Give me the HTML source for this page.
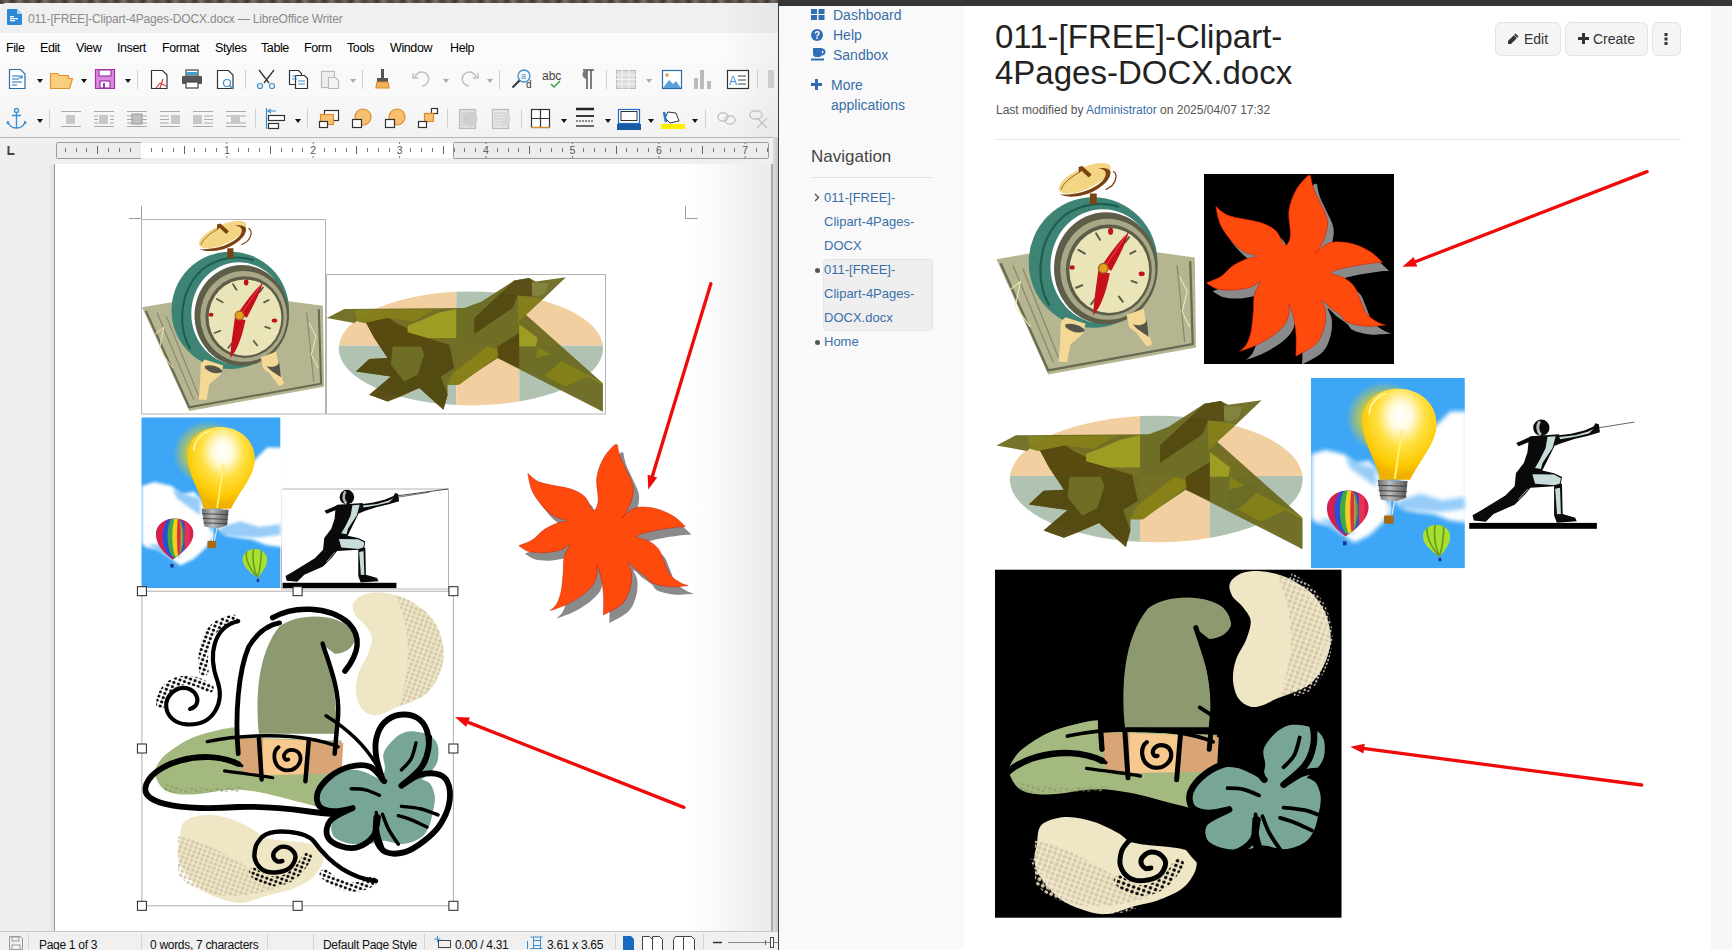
<!DOCTYPE html>
<html><head><meta charset="utf-8">
<style>
*{margin:0;padding:0;box-sizing:border-box}
html,body{width:1732px;height:950px;overflow:hidden;background:#fff;font-family:"Liberation Sans",sans-serif;position:relative}
.a{position:absolute}
.t{position:absolute;white-space:nowrap;line-height:1}
/* left window */
#desk{left:0;top:0;width:779px;height:4px;background:repeating-linear-gradient(90deg,#4a403a 0px,#6a625c 7px,#3e3630 13px,#7a726a 19px,#4a403a 26px)}
#titlebar{left:0;top:3px;width:778px;height:30px;background:#f0f0f0;border-top-left-radius:6px}
#menubar{left:0;top:33px;width:778px;height:29px;background:#fbfbfb}
#tb1{left:0;top:62px;width:778px;height:36px;background:#f9f9f9}
#tb2{left:0;top:98px;width:778px;height:39px;background:linear-gradient(#f8f8f8,#f2f2f2)}
#rulerbar{left:0;top:137px;width:778px;height:27px;background:#efefef;border-top:1px solid #b9b9b9}
#docarea{left:0;top:164px;width:778px;height:767px;background:#efefef}
#page{left:54px;top:164px;width:718px;height:767px;background:#fff;border-left:1px solid #9a9a9a}
#status{left:0;top:931px;width:778px;height:19px;background:#f0f0f0;border-top:1px solid #c8c8c8}
.menu{top:42px;font-size:12.5px;letter-spacing:-0.4px;color:#000}
.sep{position:absolute;width:1px;background:#cfcfcf}
.dd{position:absolute;width:0;height:0;border-left:3.5px solid transparent;border-right:3.5px solid transparent;border-top:4px solid #111}
.ddg{border-top-color:#aaa}
/* right window */
#rwin{left:778px;top:0;width:954px;height:950px;background:#fff;border-left:1px solid #3c3c3c}
#rtop{left:778px;top:0;width:954px;height:6px;background:#363636}
#sidebar{left:779px;top:6px;width:185px;height:944px;background:#f9f9f9}
#rpanel{left:1711px;top:6px;width:21px;height:944px;background:#f7f7f7}
.side{font-size:14px;color:#3a6fa8}
.nav{font-size:13px;color:#3a6fa8;line-height:24px}
.btn{position:absolute;top:22px;height:34px;background:#f5f5f5;border:1px solid #e3e3e3;border-radius:6px}
</style></head><body>
<!-- LEFT WINDOW -->
<div id="desk" class="a"></div>
<div id="titlebar" class="a"></div>
<div id="menubar" class="a"></div>
<div id="tb1" class="a"></div>
<div id="tb2" class="a"></div>
<div id="rulerbar" class="a"></div>
<div id="docarea" class="a"></div>
<div class="a" style="left:48px;top:165px;width:6px;height:766px;background:linear-gradient(90deg,rgba(0,0,0,0),rgba(0,0,0,0.07))"></div>
<div id="page" class="a"></div>
<div id="status" class="a"></div>
<div class="a" style="left:720px;top:3px;width:58px;height:134px;background:linear-gradient(90deg,rgba(0,0,0,0),rgba(0,0,0,0.045))"></div>

<!-- title -->
<svg class="a" style="left:7px;top:9px" width="15" height="16" viewBox="0 0 15 16"><path d="M1 0h9l5 5v10a1 1 0 0 1-1 1H1a1 1 0 0 1-1-1V1a1 1 0 0 1 1-1z" fill="#2b8ad8"/><path d="M10 0l5 5h-5z" fill="#a9d4f5"/><rect x="3" y="7" width="4" height="1.3" fill="#fff"/><rect x="3" y="9" width="8" height="1.3" fill="#fff"/><rect x="3" y="11" width="5" height="1.3" fill="#fff"/></svg>
<div class="t" style="left:28px;top:13px;font-size:12px;letter-spacing:-0.17px;color:#8a8a8a">011-[FREE]-Clipart-4Pages-DOCX.docx — LibreOffice Writer</div>

<!-- menu -->
<div class="t menu" style="left:6px">File</div>
<div class="t menu" style="left:40px">Edit</div>
<div class="t menu" style="left:76px">View</div>
<div class="t menu" style="left:117px">Insert</div>
<div class="t menu" style="left:162px">Format</div>
<div class="t menu" style="left:215px">Styles</div>
<div class="t menu" style="left:261px">Table</div>
<div class="t menu" style="left:304px">Form</div>
<div class="t menu" style="left:347px">Tools</div>
<div class="t menu" style="left:390px">Window</div>
<div class="t menu" style="left:450px">Help</div>


<!-- toolbar 1 -->
<svg class="a" style="left:0;top:62px" width="778" height="36" viewBox="0 62 778 36">
<g fill="none" stroke-width="1.2">
 <!-- new doc -->
 <path d="M9.5 69.5h11l4.5 4.5v14.5h-15.5z" stroke="#2a6bb0" fill="#fff"/>
 <path d="M12 76h7M12 79h7M12 82h10M12 85h5" stroke="#2a6bb0"/>
 <rect x="19" y="75.5" width="4" height="3" fill="#5aa0d8" stroke="none"/>
 <!-- open -->
 <path d="M50.5 73.5h7l2 2h9v3h4l-3 10h-19z" stroke="#e8902a" fill="#f9cf7d"/>
 <!-- save -->
 <path d="M95.5 69.5h19v19h-19z" stroke="#a035a8" fill="#d98ae0"/>
 <rect x="99" y="70" width="12" height="6" fill="#fff" stroke="#a035a8"/>
 <rect x="100" y="81" width="10" height="7" fill="#fff" stroke="#a035a8"/>
 <rect x="103" y="83" width="2" height="5" fill="#a035a8" stroke="none"/>
 <!-- pdf -->
 <path d="M151.5 70.5h11l4.5 4.5v13.5h-15.5z" stroke="#333" fill="#fff"/>
 <path d="M163 79l-3 9M160 83l-4 5M160 83l6 3" stroke="#e03a3a"/>
 <!-- print -->
 <rect x="186" y="70" width="12" height="6" fill="#fff" stroke="#444"/>
 <rect x="187" y="72" width="10" height="3" fill="#3aa0d8" stroke="none"/>
 <rect x="182" y="76" width="20" height="8" fill="#555" stroke="none" rx="1"/>
 <rect x="186" y="82" width="12" height="6" fill="#fff" stroke="#444"/>
 <!-- preview -->
 <path d="M217.5 70.5h11l4.5 4.5v13.5h-15.5z" stroke="#333" fill="#fff"/>
 <circle cx="227" cy="83" r="3.5" stroke="#3a8fd0" fill="#fff"/>
 <path d="M229.5 85.5l3.5 3.5" stroke="#3a8fd0" stroke-width="1.6"/>
 <!-- cut -->
 <path d="M259 70l10 13M274 70l-10 13" stroke="#333" stroke-width="1.3"/>
 <circle cx="260" cy="86" r="2.5" stroke="#3a8fd0"/><circle cx="272" cy="86" r="2.5" stroke="#3a8fd0"/>
 <!-- copy -->
 <path d="M289.5 70.5h9l3 3v11h-12z" stroke="#333" fill="#fff"/>
 <path d="M295.5 75.5h9l3 3v10h-12z" stroke="#333" fill="#fff"/>
 <path d="M292 76h5M292 79h5M298 81h7M298 84h7" stroke="#3a8fd0"/>
 <!-- paste gray -->
 <rect x="321.5" y="71.5" width="13" height="16" stroke="#bbb" fill="#eee"/>
 <path d="M328.5 77.5h7l3 3v8h-10z" stroke="#bbb" fill="#f4f4f4"/>
 <!-- brush -->
 <rect x="381" y="69" width="3" height="9" fill="#555" stroke="none"/>
 <path d="M377 78h11v4h-11z" fill="#555" stroke="none"/>
 <path d="M377 82h11l1 6h-13z" fill="#f2b25a" stroke="#e08a2a"/>
 <!-- undo/redo gray -->
 <path d="M415 77a7 7 0 1 1 7 9" stroke="#bbb" stroke-width="1.4"/><path d="M413 73v5h5" stroke="#bbb" stroke-width="1.4"/>
 <path d="M476 77a7 7 0 1 0 -7 9" stroke="#bbb" stroke-width="1.4"/><path d="M478 73v5h-5" stroke="#bbb" stroke-width="1.4"/>
 <!-- find replace -->
 <circle cx="524" cy="76" r="6" stroke="#3a8fd0" stroke-width="1.3"/>
 <path d="M519.5 80.5l-7 7" stroke="#333" stroke-width="2"/>
</g>
<text x="521" y="79" font-size="9" fill="#3a8fd0" font-family="Liberation Sans">a</text>
<text x="526" y="88" font-size="10" fill="#333" font-family="Liberation Sans">d</text>
<text x="542" y="80" font-size="12" fill="#444" font-family="Liberation Sans">abc</text>
<path d="M551 84l3 3 6-6" stroke="#3aa040" stroke-width="1.5" fill="none"/>
<path d="M583 70h11M587 70v19M591 70v19" stroke="#555" stroke-width="1.5" fill="none"/>
<path d="M587 70a4.5 4.5 0 0 0 0 9z" fill="#777"/>
<!-- table gray -->
<g fill="none" stroke="#bbb" stroke-width="1"><rect x="616.5" y="70.5" width="19" height="18" fill="#ddd"/><path d="M616 75h20M616 79.5h20M616 84h20M622 70v19M629 70v19" stroke="#f4f4f4"/></g>
<!-- image -->
<rect x="662.5" y="70.5" width="19" height="18" fill="#fff" stroke="#2a6bb0" stroke-width="1.2"/>
<circle cx="667" cy="75" r="1.8" fill="#f0a040"/>
<path d="M663 88l6-8 4 4 3-3 5 7z" fill="#5aa0d8"/>
<!-- chart gray -->
<rect x="694" y="78" width="4" height="11" fill="#bbb"/><rect x="700" y="70" width="4" height="19" fill="#bbb"/><rect x="707" y="81" width="4" height="8" fill="#bbb"/>
<!-- textbox -->
<rect x="727.5" y="70.5" width="21" height="18" fill="#fff" stroke="#333" stroke-width="1.2"/>
<text x="729" y="85" font-size="12" fill="#3a8fd0" font-family="Liberation Sans">A</text>
<path d="M738 76h8M738 80h8M738 84h8" stroke="#444" stroke-width="1"/>
<rect x="768" y="70" width="6" height="18" fill="#ccc"/>
</svg>
<div class="dd" style="left:37px;top:79px"></div>
<div class="dd" style="left:81px;top:79px"></div>
<div class="dd" style="left:125px;top:79px"></div>
<div class="dd ddg" style="left:350px;top:79px"></div>
<div class="dd ddg" style="left:443px;top:79px"></div>
<div class="dd ddg" style="left:487px;top:79px"></div>
<div class="dd ddg" style="left:646px;top:79px"></div>
<div class="sep" style="left:137px;top:70px;height:19px"></div>
<div class="sep" style="left:245px;top:70px;height:19px"></div>
<div class="sep" style="left:362px;top:70px;height:19px"></div>
<div class="sep" style="left:499px;top:70px;height:19px"></div>
<div class="sep" style="left:606px;top:70px;height:19px"></div>
<div class="sep" style="left:757px;top:70px;height:19px"></div>

<!-- toolbar 2 -->
<svg class="a" style="left:0;top:98px" width="778" height="39" viewBox="0 98 778 39">
<g fill="none" stroke-width="1.3">
 <circle cx="16.5" cy="110.5" r="2" stroke="#3a8fd0"/>
 <path d="M16.5 112.5v15M12 115.5h9M8 121a8.5 7 0 0 0 17 0" stroke="#3a8fd0"/>
 <path d="M8 121l-1 3M25 121l1 3" stroke="#3a8fd0"/>
</g>
<g id="wrap" stroke="#aaa" stroke-width="1" fill="none">
 <path d="M61 111.5h20M61 126.5h20"/>
 <rect x="66" y="115" width="9" height="9" fill="#c8c8c8" stroke="none"/>
 <path d="M94 111.5h20M94 126.5h20M94 116h4M94 119.5h4M94 123h4M110 116h4M110 119.5h4M110 123h4"/>
 <rect x="99" y="115" width="9" height="9" fill="#c8c8c8" stroke="none"/>
 <path d="M127 111.5h20M127 126.5h20M127 116h20M127 119.5h20M127 123h20"/>
 <rect x="132" y="114" width="10" height="10" fill="#c0c0c0" stroke="#999"/>
 <path d="M160 111.5h20M160 126.5h20M160 116h9M160 119.5h9M160 123h9"/>
 <rect x="171" y="115" width="9" height="9" fill="#c8c8c8" stroke="none"/>
 <path d="M193 111.5h20M193 126.5h20M204 116h9M204 119.5h9M204 123h9"/>
 <rect x="193" y="115" width="9" height="9" fill="#c8c8c8" stroke="none"/>
 <path d="M226 111.5h20M226 126.5h20M226 116h20M226 123h20"/>
 <rect x="231" y="115" width="9" height="9" fill="#c8c8c8" stroke="none"/>
</g>
<g fill="none" stroke-width="1.2">
 <path d="M266.5 108v21" stroke="#3a8fd0"/>
 <path d="M268 111h8M271 109l-3 2 3 2" stroke="#3a8fd0"/>
 <rect x="268.5" y="115.5" width="16" height="5" stroke="#333" fill="#fff"/>
 <rect x="268.5" y="123.5" width="10" height="5" stroke="#333" fill="#fff"/>
 <!-- bring front -->
 <rect x="324.5" y="110.5" width="14" height="10" stroke="#333" fill="#fff"/>
 <rect x="320.5" y="114.5" width="13" height="10" stroke="#e08a2a" fill="#f6c070"/>
 <rect x="319.5" y="121.5" width="8" height="6" stroke="#333" fill="#fff"/>
 <circle cx="363" cy="117" r="8" stroke="#e08a2a" fill="#f6c070"/>
 <rect x="352.5" y="119.5" width="9" height="8" stroke="#333" fill="#fff"/>
 <circle cx="397" cy="117" r="8" stroke="#e08a2a" fill="#f6c070"/>
 <rect x="385.5" y="119.5" width="9" height="8" stroke="#333" fill="#fff"/>
 <rect x="431.5" y="108.5" width="6" height="5" stroke="#333" fill="#fff"/>
 <rect x="424.5" y="113.5" width="9" height="8" stroke="#e08a2a" fill="#f6c070"/>
 <rect x="418.5" y="121.5" width="8" height="6" stroke="#333" fill="#fff"/>
 <!-- gray -->
 <rect x="459.5" y="109.5" width="16" height="19" stroke="#bbb" fill="#e2e2e2"/>
 <path d="M461 113h4M461 116h4M461 119h4M461 122h4M461 125h4" stroke="#c4c4c4"/>
 <circle cx="470" cy="119" r="7.5" fill="#cfcfcf" stroke="none"/>
 <rect x="492.5" y="109.5" width="16" height="19" stroke="#bbb" fill="#e8e8e8"/>
 <path d="M494 113h12M494 116h12M494 119h12M494 122h12M494 125h12" stroke="#c8c8c8"/>
 <path d="M503 111.5a7.5 7.5 0 0 1 0 15" fill="#d8d8d8" stroke="none"/>
 <!-- borders -->
 <rect x="531.5" y="109.5" width="18" height="18" stroke="#333" fill="#fff"/>
 <path d="M540.5 109v19M531 118.5h19" stroke="#333"/>
 <path d="M531 127.5h19" stroke="#e08a2a"/>
</g>
<path d="M576 109h18" stroke="#222" stroke-width="2.5"/>
<path d="M576 116h18" stroke="#222" stroke-width="1.8"/>
<path d="M576 121h18" stroke="#222" stroke-width="1" stroke-dasharray="2 1"/>
<path d="M576 126h18" stroke="#222" stroke-width="1.3"/>
<rect x="618.5" y="109.5" width="21" height="14" fill="#fff" stroke="#1e6cc0" stroke-width="1.2"/>
<rect x="621" y="111.5" width="16" height="9" fill="none" stroke="#333" stroke-width="1"/>
<rect x="617" y="124" width="24" height="6" fill="#1a5aa8"/>
<path d="M665 118l3-6 8 1 3 8-9 2z" fill="#fff" stroke="#333" stroke-width="1"/>
<path d="M664 112l2 10" stroke="#2a7ad0" stroke-width="2.5"/>
<rect x="661" y="124" width="24" height="5" fill="#ffee00"/>
<g fill="none" stroke="#c4c4c4" stroke-width="1.5">
 <rect x="718" y="113" width="10" height="8" rx="4"/><rect x="725" y="116" width="10" height="8" rx="4"/>
 <rect x="750" y="111" width="12" height="8" rx="4"/><path d="M757 118l10 10M767 118l-10 10"/>
</g>
</svg>
<div class="dd" style="left:37px;top:119px"></div>
<div class="dd" style="left:295px;top:119px"></div>
<div class="dd" style="left:561px;top:119px"></div>
<div class="dd" style="left:605px;top:119px"></div>
<div class="dd" style="left:648px;top:119px"></div>
<div class="dd" style="left:692px;top:119px"></div>
<div class="sep" style="left:49px;top:109px;height:19px"></div>
<div class="sep" style="left:255px;top:109px;height:19px"></div>
<div class="sep" style="left:307px;top:109px;height:19px"></div>
<div class="sep" style="left:447px;top:109px;height:19px"></div>
<div class="sep" style="left:521px;top:109px;height:19px"></div>
<div class="sep" style="left:705px;top:109px;height:19px"></div>


<!-- ruler -->
<svg class="a" style="left:0;top:137px" width="778" height="27" viewBox="0 137 778 27">
<path d="M8.5 146v8h6" stroke="#444" stroke-width="2" fill="none"/>
<rect x="56.5" y="142.5" width="85" height="16" fill="#ececec" stroke="#9a9a9a" stroke-width="1" rx="1"/>
<rect x="141" y="143" width="312" height="15" fill="#fff"/>
<rect x="453.5" y="142.5" width="315" height="16" fill="#ececec" stroke="#9a9a9a" stroke-width="1" rx="1"/>
<path d="M65.5 148v4" stroke="#777" stroke-width="1"/>
<path d="M76.5 148v4" stroke="#777" stroke-width="1"/>
<path d="M86.5 148v4" stroke="#777" stroke-width="1"/>
<path d="M97.5 146v8" stroke="#666" stroke-width="1"/>
<path d="M108.5 148v4" stroke="#777" stroke-width="1"/>
<path d="M119.5 148v4" stroke="#777" stroke-width="1"/>
<path d="M130.5 148v4" stroke="#777" stroke-width="1"/>
<path d="M151.5 148v4" stroke="#777" stroke-width="1"/>
<path d="M162.5 148v4" stroke="#777" stroke-width="1"/>
<path d="M173.5 148v4" stroke="#777" stroke-width="1"/>
<path d="M184.5 146v8" stroke="#666" stroke-width="1"/>
<path d="M194.5 148v4" stroke="#777" stroke-width="1"/>
<path d="M205.5 148v4" stroke="#777" stroke-width="1"/>
<path d="M216.5 148v4" stroke="#777" stroke-width="1"/>
<text x="226.8" y="154" font-size="10.5" text-anchor="middle" fill="#555" font-family="Liberation Sans">1</text>
<path d="M226.8 142v2M226.8 156v2" stroke="#777" stroke-width="1"/>
<path d="M238.5 148v4" stroke="#777" stroke-width="1"/>
<path d="M248.5 148v4" stroke="#777" stroke-width="1"/>
<path d="M259.5 148v4" stroke="#777" stroke-width="1"/>
<path d="M270.5 146v8" stroke="#666" stroke-width="1"/>
<path d="M281.5 148v4" stroke="#777" stroke-width="1"/>
<path d="M292.5 148v4" stroke="#777" stroke-width="1"/>
<path d="M302.5 148v4" stroke="#777" stroke-width="1"/>
<text x="313.2" y="154" font-size="10.5" text-anchor="middle" fill="#555" font-family="Liberation Sans">2</text>
<path d="M313.2 142v2M313.2 156v2" stroke="#777" stroke-width="1"/>
<path d="M324.5 148v4" stroke="#777" stroke-width="1"/>
<path d="M335.5 148v4" stroke="#777" stroke-width="1"/>
<path d="M346.5 148v4" stroke="#777" stroke-width="1"/>
<path d="M356.5 146v8" stroke="#666" stroke-width="1"/>
<path d="M367.5 148v4" stroke="#777" stroke-width="1"/>
<path d="M378.5 148v4" stroke="#777" stroke-width="1"/>
<path d="M389.5 148v4" stroke="#777" stroke-width="1"/>
<text x="399.6" y="154" font-size="10.5" text-anchor="middle" fill="#555" font-family="Liberation Sans">3</text>
<path d="M399.6 142v2M399.6 156v2" stroke="#777" stroke-width="1"/>
<path d="M410.5 148v4" stroke="#777" stroke-width="1"/>
<path d="M421.5 148v4" stroke="#777" stroke-width="1"/>
<path d="M432.5 148v4" stroke="#777" stroke-width="1"/>
<path d="M443.5 146v8" stroke="#666" stroke-width="1"/>
<path d="M454.5 148v4" stroke="#777" stroke-width="1"/>
<path d="M464.5 148v4" stroke="#777" stroke-width="1"/>
<path d="M475.5 148v4" stroke="#777" stroke-width="1"/>
<text x="486.0" y="154" font-size="10.5" text-anchor="middle" fill="#555" font-family="Liberation Sans">4</text>
<path d="M486.0 142v2M486.0 156v2" stroke="#777" stroke-width="1"/>
<path d="M497.5 148v4" stroke="#777" stroke-width="1"/>
<path d="M508.5 148v4" stroke="#777" stroke-width="1"/>
<path d="M518.5 148v4" stroke="#777" stroke-width="1"/>
<path d="M529.5 146v8" stroke="#666" stroke-width="1"/>
<path d="M540.5 148v4" stroke="#777" stroke-width="1"/>
<path d="M551.5 148v4" stroke="#777" stroke-width="1"/>
<path d="M562.5 148v4" stroke="#777" stroke-width="1"/>
<text x="572.4" y="154" font-size="10.5" text-anchor="middle" fill="#555" font-family="Liberation Sans">5</text>
<path d="M572.4 142v2M572.4 156v2" stroke="#777" stroke-width="1"/>
<path d="M583.5 148v4" stroke="#777" stroke-width="1"/>
<path d="M594.5 148v4" stroke="#777" stroke-width="1"/>
<path d="M605.5 148v4" stroke="#777" stroke-width="1"/>
<path d="M616.5 146v8" stroke="#666" stroke-width="1"/>
<path d="M626.5 148v4" stroke="#777" stroke-width="1"/>
<path d="M637.5 148v4" stroke="#777" stroke-width="1"/>
<path d="M648.5 148v4" stroke="#777" stroke-width="1"/>
<text x="658.8" y="154" font-size="10.5" text-anchor="middle" fill="#555" font-family="Liberation Sans">6</text>
<path d="M658.8 142v2M658.8 156v2" stroke="#777" stroke-width="1"/>
<path d="M670.5 148v4" stroke="#777" stroke-width="1"/>
<path d="M680.5 148v4" stroke="#777" stroke-width="1"/>
<path d="M691.5 148v4" stroke="#777" stroke-width="1"/>
<path d="M702.5 146v8" stroke="#666" stroke-width="1"/>
<path d="M713.5 148v4" stroke="#777" stroke-width="1"/>
<path d="M724.5 148v4" stroke="#777" stroke-width="1"/>
<path d="M734.5 148v4" stroke="#777" stroke-width="1"/>
<text x="745.2" y="154" font-size="10.5" text-anchor="middle" fill="#555" font-family="Liberation Sans">7</text>
<path d="M745.2 142v2M745.2 156v2" stroke="#777" stroke-width="1"/>
<path d="M756.5 148v4" stroke="#777" stroke-width="1"/>
<path d="M767.5 148v4" stroke="#777" stroke-width="1"/>
</svg>
<!-- page right shading -->
<div class="a" style="left:690px;top:164px;width:82px;height:767px;background:linear-gradient(90deg,rgba(255,255,255,0),rgba(235,235,235,1))"></div>
<div class="a" style="left:771px;top:164px;width:2px;height:767px;background:#a9a9a9"></div>
<div class="a" style="left:773px;top:137px;width:5px;height:794px;background:linear-gradient(90deg,#dcdcdc,#c8c8c8)"></div>
<!-- corner marks -->
<svg class="a" style="left:0;top:164px" width="778" height="767" viewBox="0 164 778 767">
<path d="M129 218.5h12.5M141.5 206v12.5" stroke="#9a9a9a" stroke-width="1" fill="none"/>
<path d="M685.5 206v12.5h12" stroke="#9a9a9a" stroke-width="1" fill="none"/>
</svg>
<!-- status bar -->
<div class="sep" style="left:28px;top:934px;height:16px;background:#d4d4d4"></div>
<svg class="a" style="left:8px;top:935px" width="16" height="15" viewBox="0 0 16 15"><path d="M1.5 1.5h11l2 2v11h-13z" fill="none" stroke="#999"/><rect x="4" y="2" width="7" height="4" fill="none" stroke="#999"/><rect x="4" y="10" width="8" height="5" fill="none" stroke="#999"/></svg>
<div class="t" style="left:39px;top:939px;font-size:12px;letter-spacing:-0.3px;color:#111">Page 1 of 3</div>
<div class="sep" style="left:141px;top:934px;height:16px;background:#d4d4d4"></div>
<div class="t" style="left:150px;top:939px;font-size:12px;letter-spacing:-0.3px;color:#111">0 words, 7 characters</div>
<div class="sep" style="left:267px;top:934px;height:16px;background:#d4d4d4"></div>
<div class="sep" style="left:313px;top:934px;height:16px;background:#d4d4d4"></div>
<div class="t" style="left:323px;top:939px;font-size:12px;letter-spacing:-0.3px;color:#111">Default Page Style</div>
<div class="sep" style="left:424px;top:934px;height:16px;background:#d4d4d4"></div>
<svg class="a" style="left:434px;top:936px" width="18" height="14" viewBox="0 0 18 14"><path d="M3.5 0v6M0.5 3h6" stroke="#3a8fd0" fill="none"/><rect x="4.5" y="4.5" width="12" height="7" fill="none" stroke="#444"/></svg>
<div class="t" style="left:455px;top:939px;font-size:12px;letter-spacing:-0.3px;color:#111">0.00 / 4.31</div>
<svg class="a" style="left:526px;top:936px" width="18" height="14" viewBox="0 0 18 14"><path d="M1.5 5v8M4.5 1h12M4.5 12.5h12M7.5 1v12M14.5 1v12" stroke="#3a8fd0" fill="none"/><rect x="7.5" y="4.5" width="7" height="5" fill="none" stroke="#3a8fd0"/></svg>
<div class="t" style="left:547px;top:939px;font-size:12px;letter-spacing:-0.3px;color:#111">3.61 x 3.65</div>
<div class="sep" style="left:615px;top:934px;height:16px;background:#d4d4d4"></div>
<svg class="a" style="left:622px;top:934px" width="80" height="16" viewBox="0 0 80 16">
<path d="M1 2h8l3 3v11h-11z" fill="#1a6ac0"/>
<path d="M20.5 2.5h7l3 3v11h-10zM30.5 2.5h7l3 3v11h-10z" fill="#fff" stroke="#444"/>
<path d="M53.5 2.5h8v14h-10v-11zM61.5 2.5h8l3 3v11h-11z" fill="#fff" stroke="#444"/>
</svg>
<div class="sep" style="left:703px;top:934px;height:16px;background:#d4d4d4"></div>
<svg class="a" style="left:708px;top:934px" width="70" height="16" viewBox="0 0 70 16">
<path d="M5 8.5h9" stroke="#333" stroke-width="1.5"/>
<path d="M20 8.5h50" stroke="#888" stroke-width="1"/>
<path d="M57.5 6v5" stroke="#666"/>
<rect x="62.5" y="3.5" width="3" height="10" fill="#fff" stroke="#444"/>
</svg>

<!-- RIGHT WINDOW -->
<div id="rwin" class="a"></div>
<div id="rtop" class="a"></div>
<div id="sidebar" class="a"></div>
<div id="rpanel" class="a"></div>


<!-- sidebar content -->
<svg class="a" style="left:811px;top:9px" width="14" height="11" viewBox="0 0 14 11"><rect x="0" y="0" width="6" height="5" fill="#2f6db5"/><rect x="7.5" y="0" width="6" height="5" fill="#2f6db5"/><rect x="0" y="6" width="6" height="5" fill="#2f6db5"/><rect x="7.5" y="6" width="6" height="5" fill="#2f6db5"/></svg>
<div class="t side" style="left:833px;top:8px">Dashboard</div>
<svg class="a" style="left:811px;top:29px" width="12" height="12" viewBox="0 0 12 12"><circle cx="6" cy="6" r="6" fill="#2f6db5"/><text x="6" y="10" font-size="10" font-weight="bold" text-anchor="middle" fill="#fff" font-family="Liberation Sans">?</text></svg>
<div class="t side" style="left:833px;top:28px">Help</div>
<svg class="a" style="left:811px;top:48px" width="15" height="13" viewBox="0 0 15 13"><path d="M2 0h9v6a3 3 0 0 1-3 3h-3a3 3 0 0 1-3-3z" fill="#2f6db5"/><path d="M11 1.5a2.5 2.5 0 0 1 0 5" stroke="#2f6db5" stroke-width="2" fill="none"/><rect x="0" y="10.5" width="13" height="2" fill="#2f6db5"/></svg>
<div class="t side" style="left:833px;top:48px">Sandbox</div>
<svg class="a" style="left:811px;top:79px" width="11" height="11" viewBox="0 0 11 11"><rect x="4" y="0" width="3" height="11" fill="#2f6db5"/><rect x="0" y="4" width="11" height="3" fill="#2f6db5"/></svg>
<div class="t side" style="left:831px;top:78px">More</div>
<div class="t side" style="left:831px;top:98px">applications</div>
<div class="t" style="left:811px;top:148px;font-size:17px;color:#444">Navigation</div>
<div class="a" style="left:811px;top:177px;width:122px;height:1px;background:#e2e2e2"></div>
<svg class="a" style="left:814px;top:193px" width="6" height="9" viewBox="0 0 6 9"><path d="M1 1l3.5 3.5L1 8" stroke="#555" stroke-width="1.4" fill="none"/></svg>
<div class="a" style="left:823px;top:259px;width:110px;height:72px;background:#efefef;border:1px solid #e4e4e4;border-radius:4px"></div>
<div class="a nav" style="left:824px;top:186px;width:110px">011-[FREE]-<br>Clipart-4Pages-<br>DOCX</div>
<div class="a" style="left:815px;top:268px;width:5px;height:5px;border-radius:50%;background:#555"></div>
<div class="a nav" style="left:824px;top:258px;width:110px">011-[FREE]-<br>Clipart-4Pages-<br>DOCX.docx</div>
<div class="a" style="left:815px;top:340px;width:5px;height:5px;border-radius:50%;background:#555"></div>
<div class="a nav" style="left:824px;top:330px;width:110px">Home</div>

<!-- main content -->
<div class="a" style="left:995px;top:19px;font-size:33px;line-height:36px;color:#222;white-space:nowrap">011-[FREE]-Clipart-<br>4Pages-DOCX.docx</div>
<div class="t" style="left:996px;top:104px;font-size:12px;color:#555">Last modified by <span style="color:#3a6fa8">Administrator</span> on 2025/04/07 17:32</div>
<div class="btn" style="left:1495px;width:66px"></div>
<div class="btn" style="left:1565px;width:83px"></div>
<div class="btn" style="left:1652px;width:29px"></div>
<svg class="a" style="left:1507px;top:33px" width="12" height="12" viewBox="0 0 12 12"><path d="M8.5 0.5l3 3-7.5 7.5H1v-3z" fill="#333"/><path d="M7 2l3 3" stroke="#f5f5f5" stroke-width="0.8"/></svg>
<div class="t" style="left:1524px;top:32px;font-size:14px;color:#333">Edit</div>
<svg class="a" style="left:1578px;top:33px" width="11" height="11" viewBox="0 0 11 11"><rect x="4" y="0" width="3" height="11" fill="#333"/><rect x="0" y="4" width="11" height="3" fill="#333"/></svg>
<div class="t" style="left:1593px;top:32px;font-size:14px;color:#333">Create</div>
<svg class="a" style="left:1664px;top:33px" width="4" height="12" viewBox="0 0 4 12"><rect x="0.5" y="0" width="3" height="3" fill="#333"/><rect x="0.5" y="4.5" width="3" height="3" fill="#333"/><rect x="0.5" y="9" width="3" height="3" fill="#333"/></svg>
<div class="a" style="left:995px;top:139px;width:686px;height:1px;background:#e5e5e5"></div>


















<!-- CLIPART START -->
<svg class="a" style="left:0;top:0" width="1732" height="950" viewBox="0 0 1732 950">

<defs>
 <pattern id="bdots" width="14" height="13" patternUnits="userSpaceOnUse" patternTransform="rotate(20)"><circle cx="7" cy="6.5" r="4.6" fill="#000"/></pattern>
 <pattern id="cdots" width="14" height="13" patternUnits="userSpaceOnUse" patternTransform="rotate(20)"><circle cx="7" cy="6.5" r="5" fill="#d5c8ac"/></pattern>
 <pattern id="gdots" width="14" height="13" patternUnits="userSpaceOnUse" patternTransform="rotate(20)"><circle cx="7" cy="6.5" r="4.5" fill="#8a9a66"/></pattern>
 <radialGradient id="bulbg" cx="0.52" cy="0.3" r="0.65"><stop offset="0" stop-color="#fff"/><stop offset="0.22" stop-color="#fffbe0"/><stop offset="0.5" stop-color="#ffe040"/><stop offset="0.85" stop-color="#fcc800"/><stop offset="1" stop-color="#f0b000"/></radialGradient>
 <radialGradient id="glowg" cx="0.5" cy="0.5" r="0.5"><stop offset="0.55" stop-color="#d8cc30" stop-opacity="0.95"/><stop offset="1" stop-color="#c8c840" stop-opacity="0"/></radialGradient>
 <linearGradient id="screwg" x1="0" x2="1"><stop offset="0" stop-color="#666"/><stop offset="0.4" stop-color="#bbb"/><stop offset="1" stop-color="#555"/></linearGradient>
 <filter id="cblur" x="-20%" y="-20%" width="140%" height="140%"><feGaussianBlur stdDeviation="9"/></filter>
 <clipPath id="ellclip"><ellipse cx="900" cy="482" rx="793" ry="342"/></clipPath>
 <clipPath id="bal1"><path d="M190,770 C120,720 100,670 103,630 C106,585 150,555 200,555 C255,555 300,590 298,635 C296,680 260,720 190,770Z"/></clipPath>
 <clipPath id="bal2"><path d="M630,865 C580,830 550,800 552,765 C555,735 585,715 615,715 C650,715 682,740 680,775 C678,805 660,830 630,865Z"/></clipPath>

 <!-- CLOCK: zoom coords, origin 985,150 scale 3.957 -->
 <g id="clock">
  <path d="M45,432 L175,410 L680,405 L830,425 L835,782 L250,888 Z" fill="#b5b592"/>
  <path d="M62,448 L250,872 L822,768 L812,440" fill="none" stroke="#6a6a52" stroke-width="9"/>
  <path d="M110,455 L270,840 M150,470 L290,820 M760,455 L790,760" fill="none" stroke="#8a8a6a" stroke-width="5"/>
  <path d="M90,560 L140,520 L120,620 L180,700 M770,500 L800,560 L780,640 L810,700" fill="none" stroke="#f0eeb8" stroke-width="4"/>
  <ellipse cx="428" cy="445" rx="255" ry="258" fill="#3d8475"/>
  <path d="M255,615 C195,520 205,335 330,248 C400,210 470,205 530,225" fill="none" stroke="#1d5e50" stroke-width="9"/>
  <ellipse cx="466" cy="460" rx="207" ry="226" fill="#fff"/>
  <ellipse cx="478" cy="468" rx="205" ry="222" fill="#5e5e48"/>
  <ellipse cx="486" cy="472" rx="188" ry="200" fill="#a8a888"/>
  <ellipse cx="490" cy="475" rx="170" ry="180" fill="#5e5e48"/>
  <ellipse cx="492" cy="477" rx="158" ry="168" fill="#e9e5b9"/>
  <g stroke="#5e5e48" stroke-width="8" stroke-linecap="round">
   <path d="M440,330 L455,355 M370,395 L395,410 M360,545 L385,535 M420,610 L435,590 M545,600 L530,580 M600,525 L580,518 M595,400 L575,410 M570,345 L555,365"/>
  </g>
  <g fill="#c01018"><ellipse cx="497" cy="322" rx="10" ry="14"/><ellipse cx="620" cy="490" rx="12" ry="9"/><ellipse cx="345" cy="465" rx="10" ry="9"/></g>
  <path d="M462,458 C500,400 540,350 568,325 C560,365 530,420 500,478 Z" fill="#c8101a"/>
  <path d="M448,478 L494,488 C480,560 460,620 428,655 C430,600 440,540 448,478 Z" fill="#c8101a"/>
  <path d="M470,470 L560,335" stroke="#f06070" stroke-width="3"/>
  <circle cx="468" cy="468" r="19" fill="#e0a020" stroke="#a06818" stroke-width="5"/>
  <path d="M318,662 L398,688 L385,730 L338,770 L325,840 L292,838 L298,740 L300,680 Z" fill="#f3d896"/>
  <path d="M318,690 C350,680 390,700 395,715 C370,730 340,720 318,700Z" fill="#55554a"/>
  <path d="M560,652 L628,628 L640,700 L662,770 L640,778 L598,722 L570,700 Z" fill="#f3d896"/>
  <path d="M585,690 C610,700 640,690 640,670 L648,740 C620,720 600,710 585,690Z" fill="#55554a"/>
  <path d="M415,172 L442,172 L442,215 L415,215 Z" fill="#7a4210"/>
  <ellipse cx="395" cy="112" rx="112" ry="42" transform="rotate(-25 395 112)" fill="#f4d584"/>
  <path d="M295,175 C332,194 395,182 432,162 C470,142 497,114 497,87 C495,74 472,69 447,72 C470,75 482,82 477,102 C470,127 432,152 382,167 C345,177 312,177 295,175 Z" fill="#7a4210"/>
  <path d="M507,84 C524,94 522,119 502,142 L477,157" fill="none" stroke="#7a4210" stroke-width="5"/>
  <path d="M370,67 L385,63 L422,97 L410,109 L382,82 L372,92 Z" fill="#7a4210"/>
  <path d="M302,157 C307,132 340,107 372,89" fill="none" stroke="#7a4210" stroke-width="3"/>
 </g>

 <!-- STAR: zoom origin 1200,170 scale 4.75 -->
 <g id="star">
  <path d="M526,28 C526,28 531,62 538,83 C545,104 559,129 570,154 C581,179 598,206 603,231 C608,256 604,278 598,302 C592,326 573,358 565,374 C557,390 544,399 548,396 C552,393 576,366 592,357 C608,348 624,342 647,341 C670,340 702,344 730,352 C758,360 789,375 812,390 C835,405 868,440 868,440 C868,440 845,439 817,443 C789,447 732,454 700,462 C668,470 624,479 622,488 C620,497 668,503 687,514 C706,525 721,537 733,553 C745,569 749,590 759,612 C769,634 777,665 791,683 C805,701 828,713 843,722 C858,731 882,736 882,736 C882,736 821,744 791,742 C761,740 720,731 700,722 C680,713 681,701 668,690 C655,679 637,669 622,657 C607,645 581,616 577,618 C573,620 594,648 596,670 C598,692 598,722 590,748 C582,774 574,803 551,826 C528,849 455,884 455,884 C455,884 458,815 456,785 C454,755 450,727 445,702 C440,677 427,640 423,636 C419,632 427,664 423,680 C419,696 415,717 401,735 C387,753 364,774 341,790 C318,806 290,822 264,834 C238,846 187,862 187,862 C187,862 211,845 220,829 C229,813 236,794 242,768 C248,742 250,704 253,675 C256,646 252,616 258,592 C264,568 288,535 286,529 C284,523 267,547 247,554 C227,561 192,568 165,570 C138,572 104,571 82,565 C60,559 30,535 30,535 C30,535 76,520 97,507 C118,494 135,469 156,455 C177,441 202,430 221,422 C240,414 274,414 273,409 C272,404 234,401 214,390 C194,379 176,366 156,344 C136,322 110,289 97,260 C84,231 75,172 75,172 C75,172 107,204 130,214 C153,224 186,228 214,234 C242,240 274,243 299,253 C324,263 347,274 364,292 C381,310 392,355 403,358 C414,361 426,339 429,312 C432,285 418,231 422,195 C426,159 441,124 455,97 C469,70 495,44 507,32 C519,20 526,28 526,28Z" transform="translate(30,40)" fill="#8a8a8a"/>
  <path d="M526,28 C526,28 531,62 538,83 C545,104 559,129 570,154 C581,179 598,206 603,231 C608,256 604,278 598,302 C592,326 573,358 565,374 C557,390 544,399 548,396 C552,393 576,366 592,357 C608,348 624,342 647,341 C670,340 702,344 730,352 C758,360 789,375 812,390 C835,405 868,440 868,440 C868,440 845,439 817,443 C789,447 732,454 700,462 C668,470 624,479 622,488 C620,497 668,503 687,514 C706,525 721,537 733,553 C745,569 749,590 759,612 C769,634 777,665 791,683 C805,701 828,713 843,722 C858,731 882,736 882,736 C882,736 821,744 791,742 C761,740 720,731 700,722 C680,713 681,701 668,690 C655,679 637,669 622,657 C607,645 581,616 577,618 C573,620 594,648 596,670 C598,692 598,722 590,748 C582,774 574,803 551,826 C528,849 455,884 455,884 C455,884 458,815 456,785 C454,755 450,727 445,702 C440,677 427,640 423,636 C419,632 427,664 423,680 C419,696 415,717 401,735 C387,753 364,774 341,790 C318,806 290,822 264,834 C238,846 187,862 187,862 C187,862 211,845 220,829 C229,813 236,794 242,768 C248,742 250,704 253,675 C256,646 252,616 258,592 C264,568 288,535 286,529 C284,523 267,547 247,554 C227,561 192,568 165,570 C138,572 104,571 82,565 C60,559 30,535 30,535 C30,535 76,520 97,507 C118,494 135,469 156,455 C177,441 202,430 221,422 C240,414 274,414 273,409 C272,404 234,401 214,390 C194,379 176,366 156,344 C136,322 110,289 97,260 C84,231 75,172 75,172 C75,172 107,204 130,214 C153,224 186,228 214,234 C242,240 274,243 299,253 C324,263 347,274 364,292 C381,310 392,355 403,358 C414,361 426,339 429,312 C432,285 418,231 422,195 C426,159 441,124 455,97 C469,70 495,44 507,32 C519,20 526,28 526,28Z" fill="#ff4a0e" stroke="#c81800" stroke-width="2.5"/>
 </g>

 <!-- JET: zoom origin 990,390 scale 5.4125 -->
 <g id="jet">
  <g clip-path="url(#ellclip)">
   <rect x="100" y="130" width="712" height="335" fill="#f2cfa0"/>
   <rect x="812" y="130" width="378" height="335" fill="#b0c2b2"/>
   <rect x="1190" y="130" width="520" height="335" fill="#f2cfa0"/>
   <rect x="100" y="465" width="712" height="370" fill="#b0c2b2"/>
   <rect x="812" y="465" width="378" height="370" fill="#f2cfa0"/>
   <rect x="1190" y="465" width="520" height="370" fill="#b0c2b2"/>
  </g>
  <g opacity="0.93">
  <path d="M35,300 L140,245 L860,240 L965,200 L1160,75 L1250,60 L1290,80 L1470,55 L1340,180 L1230,280 L1690,690 L1690,860 L1060,540 L820,700 L760,700 L760,760 L735,850 L590,720 L480,770 L400,800 L290,760 L420,650 L210,620 L290,545 L400,540 L320,420 L250,290 L200,330 Z" fill="#6a681c"/>
  <path d="M250,290 L380,275 L450,330 L640,420 L770,460 L800,600 L720,650 L760,760 L735,850 L590,720 L400,800 L290,760 L420,650 L210,620 L290,545 L400,540 L320,420 Z" fill="#4e4206"/>
  <path d="M430,470 L600,470 L620,520 L580,640 L500,680 L420,580 Z" fill="#6a681c"/>
  <path d="M920,300 L1160,75 L1250,60 L1275,85 L1265,170 L1180,165 L1150,240 L920,395 Z" fill="#4e4206"/>
  <path d="M1060,470 L1190,390 L1190,600 L1060,540 Z" fill="#4e4206"/>
  <path d="M520,345 L600,315 L700,270 L812,245 L812,420 L640,420 L520,385 Z" fill="#989a1a"/>
  <path d="M200,250 L680,248 L560,320 L400,300 L260,330 L220,320Z" fill="#7c7a10"/>
  <path d="M1180,165 L1330,185 L1230,280 L1180,330 Z" fill="#7c7a10"/>
  <path d="M1190,335 L1300,420 L1290,470 L1190,470 Z" fill="#989a1a"/>
  <path d="M1265,85 L1365,90 L1345,150 L1300,170 L1268,160 Z" fill="#7a7a32"/>
  <path d="M760,700 L790,630 L1000,470 L1055,485 L1065,525 L830,700 Z" fill="#807c0e"/>
  <path d="M1300,470 L1450,560 L1690,690 L1690,860 L1480,720 L1330,640 L1290,560 Z" fill="#807c0e"/>
  <path d="M1290,540 L1450,500 L1440,560 L1350,640 L1290,640Z" fill="#66661c"/>
  <path d="M1450,720 L1600,650 L1690,700 L1690,860Z" fill="#66661c"/>
  </g>
 </g>

 <!-- BULB: zoom origin 1305,372 scale 4.682 -->
 <g id="bulb">
  <rect x="28" y="28" width="720" height="890" fill="#3da6f6"/>
  <g filter="url(#cblur)" fill="#fff">
   <path d="M30,385 L95,365 L185,385 L235,430 L300,415 L335,455 L365,525 L355,565 L385,605 L405,645 L365,705 L300,765 L230,800 L120,720 L50,705 L30,685 Z"/>
   <path d="M425,525 L520,420 L600,265 L680,185 L760,185 L760,705 L680,695 L600,665 L520,655 L470,645 L420,605 Z"/>
  </g>
  <g filter="url(#cblur)" fill="#7cc0f6" opacity="0.8">
   <path d="M440,600 L540,570 L640,600 L748,585 L748,640 L640,655 L520,650 L440,640Z"/>
   <path d="M190,400 L260,430 L330,450 L335,540 L280,500 L210,450Z"/>
   <path d="M60,690 L160,690 L240,760 L140,740Z"/>
  </g>
  <ellipse cx="375" cy="215" rx="185" ry="170" fill="url(#glowg)"/>
  <path d="M350,505 C340,420 268,335 268,232 C268,125 358,76 440,78 C540,80 616,150 616,242 C616,335 540,405 492,505 Z" fill="url(#bulbg)"/>
  <path d="M455,270 L420,500" stroke="#fff070" stroke-width="10"/>
  <path d="M300,200 C300,150 340,110 380,100" stroke="#fff6b0" stroke-width="8" fill="none"/>
  <path d="M340,505 L480,510 L472,590 L420,607 L355,597 Z" fill="url(#screwg)"/>
  <path d="M342,530 L478,535 M345,555 L476,560 M350,578 L474,582" stroke="#444" stroke-width="5"/>
  <path d="M378,605 L385,680 M420,605 L405,680 M398,605 L396,680" stroke="#eee" stroke-width="5"/>
  <rect x="370" y="672" width="45" height="38" fill="#a86a10"/>
  <g clip-path="url(#bal1)">
   <rect x="100" y="550" width="200" height="230" fill="#d42050"/>
   <ellipse cx="200" cy="650" rx="62" ry="110" fill="#2a50d8"/>
   <ellipse cx="205" cy="650" rx="42" ry="110" fill="#40a848"/>
   <ellipse cx="212" cy="650" rx="24" ry="110" fill="#f0d020"/>
   <ellipse cx="222" cy="650" rx="10" ry="110" fill="#e03040"/>
   <ellipse cx="265" cy="650" rx="14" ry="110" fill="#e83050"/>
  </g>
  <path d="M180,770 L185,795" stroke="#888" stroke-width="3"/>
  <rect x="178" y="793" width="16" height="18" fill="#1a2a90"/>
  <g clip-path="url(#bal2)">
   <rect x="540" y="710" width="150" height="160" fill="#a8e030"/>
   <path d="M575,715 C560,760 590,820 630,865 M610,715 C600,770 615,830 630,865 M650,715 C650,770 640,830 630,865" stroke="#6a9a20" stroke-width="8" fill="none"/>
  </g>
  <rect x="626" y="870" width="12" height="16" fill="#1a2a90"/>
 </g>

 <!-- FENCER: zoom origin 1462,410 scale 7.6 -->
 <g id="fencer">
  <rect x="55" y="858" width="970" height="45" fill="#000"/>
  <path d="M520,200 L740,185 L700,280 L640,400 L610,460 L700,480 L760,510 L750,565 L700,580 L520,590 L480,640 L400,720 L240,790 L180,850 L90,840 L80,800 L150,760 L330,650 L400,580 L410,480 L470,402 L498,320 L505,245 L430,275 L412,250 L510,208 Z" fill="#0a0a0a"/>
  <path d="M690,198 L830,180 L930,155 L1000,125 L1015,100 L1040,108 L1048,170 L960,195 L860,218 L760,250 L705,272 Z" fill="#0a0a0a"/>
  <path d="M740,206 L860,192 L960,163 L1000,142 L965,178 L860,204 L745,222Z" fill="#c8dcdc"/>
  <path d="M700,570 L760,560 L765,790 L860,818 L872,846 L720,856 L700,800 Z" fill="#0a0a0a"/>
  <circle cx="603" cy="135" r="62" fill="#0a0a0a"/>
  <path d="M590,86 C570,120 573,160 598,190" stroke="#b4b8b8" stroke-width="22" fill="none"/>
  <path d="M650,203 L712,200 L688,288 L612,402 L600,449 L555,440 L590,380 L635,290 Z" fill="#c8dcdc"/>
  <path d="M535,488 L700,490 L752,518 L742,560 L700,572 L555,560 Z" fill="#c8dcdc"/>
  <path d="M708,598 L745,590 L752,790 L722,792 Z" fill="#c8dcdc"/>
  <path d="M430,680 L500,600" stroke="#c8dcdc" stroke-width="6"/>
  <path d="M1040,135 L1310,92" stroke="#111" stroke-width="5"/>
 </g>

 <!-- LEPRECHAUN: left zoom coords origin 135,585 scale 2.905 -->
 <g id="lep">
  <path id="blob1" d="M634,54 C638,44 652,32 666,27 C680,22 698,21 715,22 C732,23 752,28 768,33 C784,38 797,45 811,54 C825,63 842,73 854,87 C866,101 879,120 886,140 C893,160 898,184 897,205 C896,226 889,247 881,265 C873,283 862,300 849,313 C836,326 815,333 800,340 C785,347 770,351 758,356 C746,361 737,368 725,372 C713,376 700,381 688,378 C676,375 664,368 656,356 C648,344 643,325 642,308 C641,291 644,272 650,254 C656,236 671,217 677,200 C683,183 690,165 688,151 C686,137 674,125 666,114 C658,103 645,97 640,87 C635,77 630,64 634,54Z" fill="#eee6c4"/>
  <clipPath id="b1c"><path d="M634,54 C638,44 652,32 666,27 C680,22 698,21 715,22 C732,23 752,28 768,33 C784,38 797,45 811,54 C825,63 842,73 854,87 C866,101 879,120 886,140 C893,160 898,184 897,205 C896,226 889,247 881,265 C873,283 862,300 849,313 C836,326 815,333 800,340 C785,347 770,351 758,356 C746,361 737,368 725,372 C713,376 700,381 688,378 C676,375 664,368 656,356 C648,344 643,325 642,308 C641,291 644,272 650,254 C656,236 671,217 677,200 C683,183 690,165 688,151 C686,137 674,125 666,114 C658,103 645,97 640,87 C635,77 630,64 634,54Z"/></clipPath><path clip-path="url(#b1c)" d="M740,0 C800,100 820,250 740,400 L920,400 L920,0Z" fill="url(#cdots)"/>
  <path d="M130,741 C133,726 130,701 142,689 C154,677 180,670 203,668 C226,666 255,673 278,680 C301,687 327,701 342,710 C357,719 369,732 369,732 C369,732 392,738 414,741 C436,744 478,746 499,750 C520,754 533,758 541,765 C549,772 548,785 547,795 C546,805 542,815 535,826 C528,837 520,849 505,859 C490,869 465,880 445,887 C425,894 407,896 384,902 C361,908 332,922 309,923 C286,924 268,918 248,911 C228,904 207,896 188,881 C169,866 147,837 136,820 C125,803 125,790 124,777 C123,764 127,756 130,741Z" fill="#eee6c4"/>
  <path d="M125,730 C200,740 300,800 420,880 C300,915 180,915 125,840 Z" fill="url(#cdots)"/>
  <path d="M59,534 C59,534 71,508 87,494 C103,480 131,461 153,450 C175,439 197,433 220,427 C243,421 279,412 293,414 C307,416 302,442 302,442 C302,442 600,452 600,452 C600,452 601,561 601,561 C601,561 568,654 568,654 C568,654 537,646 518,641 C499,636 474,630 452,624 C430,618 408,612 386,607 C364,602 341,598 319,596 C297,594 275,595 253,597 C231,599 209,605 187,607 C165,609 138,610 120,607 C102,604 91,599 81,591 C71,583 65,570 61,561 C57,552 59,534 59,534Z" fill="#a3b97f"/>
  <path d="M75,575 C150,595 250,590 320,585 L300,600 L90,605Z" fill="url(#gdots)" opacity="0.7"/>
  <path d="M360,432 C350,330 355,200 420,120 C470,80 590,80 630,130 C655,165 620,200 580,200 L548,175 C575,260 590,360 582,432 Z" fill="#8d9a6f"/>
  <path d="M300,445 L605,458 L600,548 L310,552 Z" fill="#d9a476"/>
  <path d="M372,447 L500,452 L496,550 L372,552 Z" fill="#f8c98f"/>
  <path d="M817,426 C829,427 844,430 854,436 C864,442 875,452 879,465 C883,478 882,498 879,511 C876,524 866,535 858,544 C850,553 833,565 833,565 C833,565 852,570 858,578 C864,586 870,602 871,615 C872,628 869,642 866,656 C863,670 860,689 854,702 C848,715 841,727 829,735 C817,743 798,750 784,752 C770,754 747,748 747,748 C747,748 728,742 718,743 C708,744 700,750 685,752 C670,754 644,755 627,752 C610,749 592,743 582,735 C572,727 569,712 570,702 C571,692 577,681 586,673 C595,665 623,652 623,652 C623,652 591,654 578,652 C565,650 553,647 545,640 C537,633 531,623 530,611 C529,599 534,580 541,569 C548,558 560,550 574,544 C588,538 607,536 623,536 C639,536 653,538 669,544 C685,550 718,569 718,569 C718,569 725,545 726,532 C727,519 718,504 722,490 C726,476 741,459 751,449 C761,439 773,432 784,428 C795,424 805,425 817,426Z" fill="#78a696"/>
  <g fill="none" stroke="#000" stroke-linecap="round">
   <path d="M300,520 C200,470 40,520 30,590 C25,640 150,655 300,645 C420,640 500,660 570,665" stroke-width="17"/>
   <path d="M210,455 C300,435 480,425 590,470" stroke-width="10"/>
   <path d="M260,540 C330,550 380,555 400,560 M270,505 C290,515 300,520 310,525" stroke-width="9"/>
   <path d="M360,445 L368,565 M505,450 L495,570" stroke-width="13"/>
   <path d="M300,490 C290,380 300,250 330,180 C360,130 390,115 420,110" stroke-width="14"/>
   <path d="M400,95 C460,60 560,60 620,110 C660,150 650,200 610,250" stroke-width="16"/>
   <path d="M545,170 C560,220 595,300 590,380 L580,490" stroke-width="13"/>
   <path d="M417,471 C399,484 399,527 432,537 C462,544 485,521 480,497 C475,477 448,474 437,487 C428,497 435,511 445,507" stroke-width="11"/>
   <path d="M300,105 C230,120 210,200 240,280 C260,340 230,410 150,405 C80,400 70,320 130,300 C180,290 200,350 160,360" stroke-width="12"/>
   <path d="M555,380 C620,420 670,470 700,520" stroke-width="10"/>
   <path d="M719,565 C716,554 704,521 701,501 C698,481 697,463 701,446 C705,429 712,412 724,400 C736,388 754,379 770,377 C786,375 807,378 820,386 C833,394 843,408 848,423 C853,438 855,460 852,478 C849,496 842,516 829,533 C816,550 783,575 774,583 M774,583 C783,578 810,556 829,551 C848,546 871,546 885,551 C899,556 908,568 912,583 C916,598 916,619 912,638 C908,657 897,680 885,698 C873,716 856,731 839,744 C822,757 802,771 784,776 C766,781 743,782 729,776 C715,770 706,756 701,739 C696,722 701,686 701,675 M724,570 C717,563 700,535 683,528 C666,521 642,523 623,528 C604,533 583,544 568,556 C553,568 536,588 531,602 C526,616 528,634 536,643 C544,652 561,656 577,657 C593,658 623,650 632,648 M632,648 C621,654 580,670 568,684 C556,698 554,718 559,730 C564,742 582,753 596,758 C610,763 630,767 646,762 C662,757 682,744 692,730 C702,716 704,684 706,675" stroke-width="17"/>
   
   
   <path d="M628,592 C635,592 655,592 669,595 C683,598 703,608 710,611 M774,643 C783,644 811,646 829,650 C847,654 872,665 880,668 M765,670 C772,672 793,678 807,684 C821,690 841,700 848,703 M701,661 C702,671 702,702 706,721 C710,740 721,767 724,776 M719,666 C722,674 730,698 738,712 C746,726 760,746 765,753 M774,537 C779,532 795,518 802,505 C809,492 814,467 816,459 M817,553 C822,546 839,530 846,511 C853,492 856,453 858,441" stroke-width="10"/>
   <path d="M700,860 C620,850 560,800 520,745 C495,715 400,705 369,732 C366,736 354,748 351,759 C348,770 345,784 348,795 C351,806 359,819 369,826 C379,833 395,836 408,835 C421,834 438,830 448,823 C458,816 465,801 466,792 C467,783 460,773 454,768 C448,763 438,760 430,760 C422,760 413,766 408,771 C403,776 401,784 402,789 C403,794 410,801 414,803 C418,805 426,802 428,802" stroke-width="13"/>
   <path d="M285,100 C220,110 190,160 200,250 M75,345 C80,280 150,255 215,300 M345,835 C385,875 455,875 500,790 M550,840 C600,885 650,885 690,860" stroke="url(#bdots)" stroke-width="28"/>
  </g>
 </g>
</defs>

<g fill="none" stroke="#b4b4b4" stroke-width="1">
<rect x="141.5" y="219.5" width="184" height="194.5"/>
<rect x="326.5" y="274.5" width="279" height="139.5"/>
<rect x="281.5" y="489" width="167" height="100"/>
</g>
<use href="#clock" transform="translate(142,220.5) scale(0.912,0.899) translate(-996.4,-162.6) translate(985,150) scale(0.252717)"/>
<use href="#jet" transform="translate(326.8,277.3) scale(0.902,0.902) translate(-996.5,-400.2) translate(990,390) scale(0.184758)"/>
<use href="#bulb" transform="translate(141.5,417.5) scale(0.9026,0.897) translate(-1311,-378) translate(1305,372) scale(0.213584)"/>
<use href="#fencer" transform="translate(282,490) scale(0.892,0.9) translate(-1468.6,-419.8) translate(1462,410) scale(0.131579)"/>
<path d="M396,496 L448,489" stroke="#222" stroke-width="0.8"/>
<use href="#star" transform="translate(518.9,445.3) scale(0.9436,0.9436) translate(-1206.3,-176.3) translate(1200,170) scale(0.210526)"/>
<use href="#lep" transform="translate(135,585) scale(0.344234)"/>
<rect x="141.9" y="591.2" width="311.5" height="314.6" fill="none" stroke="#b0b0b0" stroke-width="1"/>
<rect x="137.4" y="586.7" width="9" height="9" fill="#fff" stroke="#222" stroke-width="1"/>
<rect x="137.4" y="744.0" width="9" height="9" fill="#fff" stroke="#222" stroke-width="1"/>
<rect x="137.4" y="901.3" width="9" height="9" fill="#fff" stroke="#222" stroke-width="1"/>
<rect x="293.1" y="586.7" width="9" height="9" fill="#fff" stroke="#222" stroke-width="1"/>
<rect x="293.1" y="901.3" width="9" height="9" fill="#fff" stroke="#222" stroke-width="1"/>
<rect x="448.9" y="586.7" width="9" height="9" fill="#fff" stroke="#222" stroke-width="1"/>
<rect x="448.9" y="744.0" width="9" height="9" fill="#fff" stroke="#222" stroke-width="1"/>
<rect x="448.9" y="901.3" width="9" height="9" fill="#fff" stroke="#222" stroke-width="1"/>
<path d="M710.9,283.6 L651.5,479.0" stroke="#f00a0a" stroke-width="3.3" stroke-linecap="round"/><path d="M648.3,489.5 L647.6,474.7 L657.2,477.6Z" fill="#f00a0a"/>
<path d="M683.9,807.4 L465.2,721.1" stroke="#f00a0a" stroke-width="3.3" stroke-linecap="round"/><path d="M455.0,717.1 L469.9,717.6 L466.2,726.9Z" fill="#f00a0a"/>
<use href="#clock" transform="translate(985,150) scale(0.252717)"/>
<rect x="1204" y="174" width="190" height="190" fill="#000"/>
<use href="#star" transform="translate(1200,170) scale(0.210526)"/>
<use href="#jet" transform="translate(990,390) scale(0.184758)"/>
<use href="#bulb" transform="translate(1305,372) scale(0.213584)"/>
<use href="#fencer" transform="translate(1462,410) scale(0.131579)"/>
<rect x="995" y="569.7" width="346.5" height="348" fill="#000"/>
<svg x="995" y="569.7" width="346.5" height="348" viewBox="995 569.7 346.5 348" overflow="hidden">
<use href="#lep" transform="translate(994.7,569.7) scale(1.11297,1.10558) translate(-141.9,-591.2) translate(135,585) scale(0.344234)"/>
<defs><pattern id="wdots" width="4" height="4" patternUnits="userSpaceOnUse" patternTransform="rotate(20)"><circle cx="2" cy="2" r="1.25" fill="#efe9dc"/></pattern></defs>
<path d="M1290,577 C1305,585 1322,600 1327,625 C1331,650 1322,675 1306,688 L1293,693" fill="none" stroke="url(#wdots)" stroke-width="9" opacity="0.85"/>
<path d="M1034,858 C1040,880 1058,898 1085,906 C1105,912 1125,910 1134,905" fill="none" stroke="url(#wdots)" stroke-width="8" opacity="0.85"/>
</svg>
<path d="M1647.1,171.6 L1412.7,262.8" stroke="#f00a0a" stroke-width="3.3" stroke-linecap="round"/><path d="M1402.4,266.8 L1413.6,257.1 L1417.3,266.4Z" fill="#f00a0a"/>
<path d="M1641.7,785.0 L1361.2,748.2" stroke="#f00a0a" stroke-width="3.3" stroke-linecap="round"/><path d="M1350.3,746.8 L1364.8,743.7 L1363.5,753.6Z" fill="#f00a0a"/>
</svg>
<!-- CLIPART END -->
</body></html>
